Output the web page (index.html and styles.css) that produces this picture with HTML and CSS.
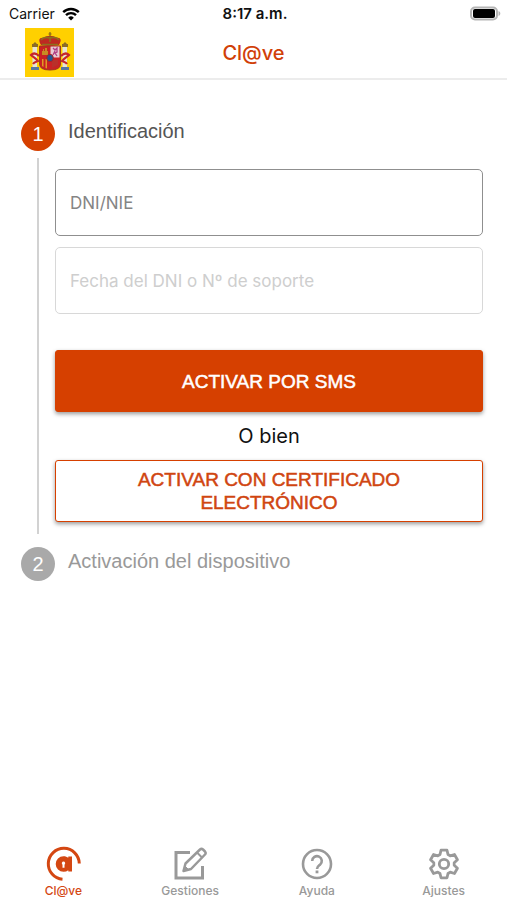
FILE: index.html
```html
<!DOCTYPE html>
<html lang="es">
<head>
<meta charset="utf-8">
<meta name="viewport" content="width=device-width, initial-scale=1">
<title>Cl@ve</title>
<link rel="stylesheet" href="styles.css">
</head>
<body>
<div class="app">
  <div class="status">
    <div class="carrier">
      <span>Carrier</span>
      <svg width="18" height="14" viewBox="0 0 18 14" aria-hidden="true">
        <path d="M1.2 5.2a11.2 11.2 0 0 1 15.6 0M4 8.2a7.1 7.1 0 0 1 10 0" fill="none" stroke="#000" stroke-width="2.4"/>
        <path d="M9 13.6 6.2 10.7a4 4 0 0 1 5.6 0z"/>
      </svg>
    </div>
    <span class="clock">8:17 a.m.</span>
    <svg class="battery" width="31" height="16" viewBox="0 0 31 16" aria-hidden="true">
      <rect x="1" y="1.500" width="26" height="12" rx="4" fill="#fff" stroke="#b5b5b5" stroke-width="2"/>
      <rect x="3" y="3" width="22" height="9" rx="2"/>
      <path d="M28.5 5c2.4 1 2.4 4 0 5z" fill="#b5b5b5"/>
    </svg>
  </div>

  <header class="header">
    <svg class="crest" width="49" height="49" viewBox="0 0 49 49" role="img" aria-label="Escudo de España">
      <rect width="49" height="49" fill="#ffd000"/>
      <g fill="#e8e4d4">
        <rect x="7.500" y="18" width="4.500" height="21"/>
        <rect x="37.500" y="18" width="4.500" height="21"/>
      </g>
      <g fill="#8b6c25">
        <rect x="7" y="16" width="6" height="3"/><rect x="37" y="16" width="6" height="3"/>
        <path d="M8 16l2-2 2 2zM38 16l2-2 2 2z"/>
      </g>
      <g fill="#5877a0">
        <rect x="6" y="39" width="8" height="3"/><rect x="36" y="39" width="8" height="3"/>
      </g>
      <path d="M14 28c-3-3-6-3-8-1 2 2 5 3 7 6-2 1-4 1-5 3M36 28c3-3 6-3 8-1-2 2-5 3-7 6 2 1 4 1 5 3" fill="none" stroke="#c6252b" stroke-width="2.200"/>
      <path d="M14.500 18h21v18q0 6-10.500 6t-10.500-6z" fill="#c92124" stroke="#9c3a1c"/>
      <path d="M25.500 18.500h9v11h-9z" fill="#e7cbd3"/>
      <path d="M28 20l2 2 2-2v4l-2 1 2 3M30 23l-2 4" fill="none" stroke="#b13c83" stroke-width="1.300"/>
      <path d="M17 27v-4h1v-2h1v2h1v-3h2v3h1v4z" fill="#c78c23"/>
      <path d="M17 31v7l1.500 1V31zM20.500 31v9l1.500.5V31z" fill="#e09a22"/>
      <path d="M27 32h6v5l-6 3z" fill="#b9302a"/>
      <ellipse cx="25" cy="30" rx="3.300" ry="3.700" fill="#22558f" stroke="#a22"/>
      <path d="M16 17c-3-5-2-8 3-7 2-3 10-3 12 0 5-1 6 2 3 7-5 1.500-13 1.500-18 0z" fill="#be2a21"/>
      <path d="M17 16.500h16M16 12q3-4 9-2 6-2 9 2M25 9v5" fill="none" stroke="#8d701d" stroke-width="1.600"/>
      <path d="M25 4v5M23.500 6h3" stroke="#856518" stroke-width="1.200"/>
    </svg>
    <h1>Cl@ve</h1>
  </header>

  <main class="main">
    <section class="step">
      <div class="rail"><span class="num">1</span><span class="line"></span></div>
      <div class="body">
        <h2>Identificación</h2>
        <form class="form">
          <input class="field" type="text" placeholder="DNI/NIE" aria-label="DNI/NIE">
          <input class="field muted" type="text" placeholder="Fecha del DNI o Nº de soporte" aria-label="Fecha del DNI o Nº de soporte" disabled>
          <button class="btn primary" type="button">ACTIVAR POR SMS</button>
          <p class="or">O bien</p>
          <button class="btn outline" type="button">ACTIVAR CON CERTIFICADO ELECTRÓNICO</button>
        </form>
      </div>
    </section>
    <section class="step pending">
      <div class="rail"><span class="num">2</span></div>
      <div class="body"><h2>Activación del dispositivo</h2></div>
    </section>
  </main>

  <nav class="tabs">
    <a class="tab active" href="#clave" aria-current="page">
      <svg width="36" height="36" viewBox="0 0 36 36" aria-hidden="true">
        <path d="M17.500 33.300A15.500 15.500 0 1 1 34.300 17.500" fill="none" stroke="currentColor" stroke-width="3"/>
        <path d="M18.500 10.200c2 0 3.600.6 4.800 1.600v-1.300H27v15h-3.700v-1.300a7.600 7.600 0 0 1-4.800 1.600 7.800 7.800 0 0 1 0-15.600z" fill="currentColor"/>
        <path d="M18.500 15.500a1.800 1.800 0 0 1 1 3.200v3h-2v-3a1.800 1.800 0 0 1 1-3.200z" fill="#fff"/>
      </svg>
      <span>Cl@ve</span>
    </a>
    <a class="tab" href="#gestiones">
      <svg width="36" height="36" viewBox="0 0 36 36" fill="none" stroke="currentColor" aria-hidden="true">
        <path d="M18 6.500H4v25.500h26.500V20" stroke-width="3"/>
        <path d="M11.500 25l2-7.500L28 3.500q1.500-1.300 3 0l2 2q1.300 1.500 0 3L19 23z" stroke-width="2.500" stroke-linejoin="round"/>
        <path d="M25 6.500l5.500 5.500" stroke-width="2"/>
        <path d="M11.500 25l1.500-5 3.500 3.500z" fill="currentColor"/>
      </svg>
      <span>Gestiones</span>
    </a>
    <a class="tab" href="#ayuda">
      <svg width="36" height="36" viewBox="0 0 36 36" fill="none" stroke="currentColor" aria-hidden="true">
        <circle cx="18" cy="18" r="14" stroke-width="2.600"/>
        <path d="M13.200 15a4.800 4.800 0 1 1 7.800 3.700c-1.800 1.400-3 2.100-3 4.200" stroke-width="2.600"/>
        <path d="M16.600 24.500h2.800v2.800h-2.800z" fill="currentColor" stroke="none"/>
      </svg>
      <span>Ayuda</span>
    </a>
    <a class="tab" href="#ajustes">
      <svg width="36" height="36" viewBox="-18 -18 36 36" fill="none" stroke="currentColor" stroke-width="2.800" stroke-linejoin="round" aria-hidden="true">
        <path d="M-4-9.500-3-13.800H3L4-9.500 6.200-8.200 10.450-9.500 13.450-4.300 10.200-1.300V1.300L13.450 4.300 10.450 9.500 6.200 8.200 4 9.500 3 13.800H-3L-4 9.500-6.200 8.200-10.450 9.500-13.450 4.300-10.200 1.300V-1.300L-13.450-4.300-10.450-9.500-6.200-8.200z"/>
        <circle r="4.700"/>
      </svg>
      <span>Ajustes</span>
    </a>
  </nav>
</div>
</body>
</html>
```
FILE: styles.css
```css
* {
  box-sizing: border-box;
}

body {
  margin: 0;
  background: #fff;
  color: #111;
  font-family: "Liberation Sans", Arial, sans-serif;
}

.app {
  display: flex;
  flex-direction: column;
  min-height: 100vh;
}

.status {
  display: grid;
  grid-template-columns: 1fr auto 1fr;
  align-items: center;
  height: 27px;
  padding: 0 6px 0 9px;
  font: 14px/20px Inter, sans-serif;
}

.carrier {
  display: flex;
  align-items: center;
  gap: 7px;
}

.clock {
  font-size: 15px;
  font-weight: 600;
}

.battery {
  justify-self: end;
}

.header {
  display: grid;
  grid-template-columns: 1fr auto 1fr;
  align-items: center;
  height: 53px;
  padding: 0 25px;
  border-bottom: 2px solid #ececec;
}

.header h1 {
  margin: 0;
  color: #d13f08;
  font: 500 20px/24px Inter, sans-serif;
}

.main {
  flex: 1;
  padding: 37px 24px 0 21px;
}

.step {
  display: flex;
}

.rail {
  display: flex;
  flex: none;
  flex-direction: column;
  align-items: center;
  gap: 7px;
  width: 34px;
}

.num {
  width: 34px;
  height: 34px;
  border-radius: 50%;
  background: #d64000;
  color: #fff;
  font-size: 20px;
  line-height: 35px;
  text-align: center;
}

.line {
  flex: 1;
  width: 2px;
  background: #d2d2d2;
}

.body {
  flex: 1;
  min-width: 0;
}

.body h2 {
  margin: 0 0 0 13px;
  color: #555;
  font-size: 20px;
  font-weight: 400;
  line-height: 29px;
}

.form {
  display: flex;
  flex-direction: column;
  padding: 23px 0 12px;
}

.field {
  width: 100%;
  height: 67px;
  margin-bottom: 11px;
  padding: 0 14px;
  border: 1px solid #8f8f8f;
  border-radius: 5px;
  background: #fff;
  font: 17px/24px Inter, sans-serif;
}

.field::placeholder {
  color: #858585;
  opacity: 1;
}

.field.muted {
  border-color: #d8d8d8;
}

.field.muted::placeholder {
  color: #cecece;
}

.btn {
  height: 62px;
  padding: 0 56px;
  border: 1px solid #d64000;
  border-radius: 3px;
  box-shadow: 0 2px 4px rgba(0, 0, 0, 0.4);
  font: 19px/23px "Liberation Sans", Arial, sans-serif;
  -webkit-text-stroke: 0.5px currentColor;
}

.primary {
  margin-top: 25px;
  background: #d64000;
  color: #fff;
}

.outline {
  background: #fff;
  color: #d04510;
}

.or {
  margin: 0;
  padding: 12px 0;
  font: 20px/24px Inter, sans-serif;
  text-align: center;
}

.pending {
  margin-top: 13px;
}

.pending .num {
  background: #a9a9a9;
}

.pending h2 {
  color: #999;
}

.tabs {
  display: grid;
  grid-template-columns: repeat(4, 1fr);
}

.tab {
  display: flex;
  flex-direction: column;
  align-items: center;
  color: #999;
  font: 500 12px/18px Inter, sans-serif;
  text-decoration: none;
}

.tab.active {
  color: #d44712;
}
```
